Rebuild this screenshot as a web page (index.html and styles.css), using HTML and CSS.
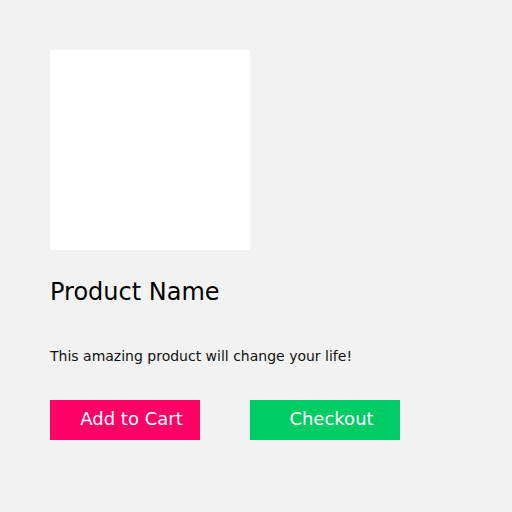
FILE: index.html
```html
<!DOCTYPE html>
<html>
<head>
<meta charset="utf-8">
<link rel="stylesheet" href="styles.css">
</head>
<body>
<div class="product">
  <div class="product-image"></div>
  <h1 class="product-name">Product Name</h1>
  <p class="product-desc">This amazing product will change your life!</p>
  <div class="actions">
    <button class="btn btn-cart">Add to Cart</button>
    <button class="btn btn-checkout">Checkout</button>
  </div>
</div>
</body>
</html>
```
FILE: styles.css
```css
html, body {
  margin: 0;
  padding: 0;
  background: #f2f2f2;
  font-family: "DejaVu Sans", sans-serif;
}
.product {
  padding: 50px;
}
.product-image {
  width: 200px;
  height: 200px;
  background: #ffffff;
}
.product-name {
  margin: 28px 0 0 0;
  font-size: 24px;
  line-height: 28px;
  font-weight: normal;
  color: #000;
}
.product-desc {
  margin: 42px 0 0 0;
  font-size: 14px;
  line-height: 16px;
  color: #111;
}
.actions {
  margin-top: 36px;
  display: flex;
  gap: 50px;
}
.btn {
  box-sizing: border-box;
  width: 150px;
  height: 40px;
  border: none;
  padding: 0 0 2px 13px;
  text-align: center;
  font-family: "DejaVu Sans", sans-serif;
  font-size: 18px;
  line-height: 38px;
  color: #fff;
}
.btn-cart { background: #ff0066; }
.btn-checkout { background: #00cc66; }
```
